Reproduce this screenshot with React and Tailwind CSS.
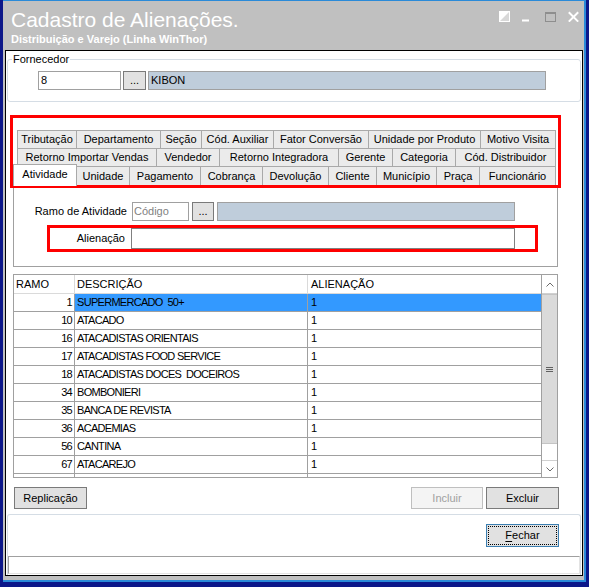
import React from "react";

// Tab captions, grouped by strip row, with their widths
const tabRow1 = [
  { label: "Tributação", cls: "w-[60px] border-l" },
  { label: "Departamento", cls: "w-[84px]" },
  { label: "Seção", cls: "w-[41px]" },
  { label: "Cód. Auxiliar", cls: "w-[72px]" },
  { label: "Fator Conversão", cls: "w-[95px]" },
  { label: "Unidade por Produto", cls: "w-[112px]" },
  { label: "Motivo Visita", cls: "w-[75px]" },
];

const tabRow2 = [
  { label: "Retorno Importar Vendas", cls: "w-[140px] border-l" },
  { label: "Vendedor", cls: "w-[63px]" },
  { label: "Retorno Integradora", cls: "w-[119px]" },
  { label: "Gerente", cls: "w-[54px]" },
  { label: "Categoria", cls: "w-[63px]" },
  { label: "Cód. Distribuidor", cls: "w-[100px]" },
];

const tabRow3 = [
  { label: "Unidade", cls: "w-[53px]" },
  { label: "Pagamento", cls: "w-[71px]" },
  { label: "Cobrança", cls: "w-[62px]" },
  { label: "Devolução", cls: "w-[66px]" },
  { label: "Cliente", cls: "w-[48px]" },
  { label: "Município", cls: "w-[60px]" },
  { label: "Praça", cls: "w-[43px]" },
  { label: "Funcionário", cls: "w-[76px]" },
];

const ramos = [
  [1, "SUPERMERCADO  50+"],
  [10, "ATACADO"],
  [16, "ATACADISTAS ORIENTAIS"],
  [17, "ATACADISTAS FOOD SERVICE"],
  [18, "ATACADISTAS DOCES  DOCEIROS"],
  [34, "BOMBONIERI"],
  [35, "BANCA DE REVISTA"],
  [36, "ACADEMIAS"],
  [56, "CANTINA"],
  [67, "ATACAREJO"],
];

function Tab({ label, cls }) {
  return (
    <div
      className={`flex items-center justify-center shrink-0 h-full border-t border-r border-[#a9a9a9] bg-[#ebebeb] whitespace-nowrap ${cls}`}
    >
      {label}
    </div>
  );
}

function GridRow({ ramo, desc, selected }) {
  return (
    <div className="flex h-[18px] shrink-0 border-b border-[#a0a0a0] text-[11px] tracking-[-0.7px]">
      <div className="w-[61px] shrink-0 flex items-center justify-end pr-[2px] border-r border-[#a0a0a0] bg-white">
        {ramo}
      </div>
      <div
        className={`w-[233px] shrink-0 flex items-center pl-[2px] border-r border-[#a0a0a0] whitespace-pre ${
          selected ? "bg-[#3399ff]" : "bg-white"
        }`}
      >
        {desc}
      </div>
      <div
        className={`flex-1 flex items-center pl-[3px] ${
          selected ? "bg-[#3399ff]" : "bg-white"
        }`}
      >
        {ramo === null ? "" : "1"}
      </div>
    </div>
  );
}

function Chevron({ up }) {
  return (
    <svg width="8" height="5" viewBox="0 0 8 5">
      <path
        d={up ? "M0.5 4.5 L4 1 L7.5 4.5" : "M0.5 0.5 L4 4 L7.5 0.5"}
        fill="none"
        stroke="#6a6a6a"
        strokeWidth="1"
      />
    </svg>
  );
}

export default function App() {
  return (
    <div className="w-[589px] h-[587px] bg-[#0c1789] pl-[3px] pr-[3px] pb-[5px] font-['Liberation_Sans',Arial,sans-serif] text-[11px] leading-[13px] text-black">
      <div className="h-full flex flex-col bg-[#c0c0c0] border-t border-r-2 border-b-2 border-[#2a8ad8] pl-[2px] pr-[1px] pb-[4px]">
        {/* Title bar */}
        <div className="h-[49px] shrink-0 flex justify-between">
          <div className="flex flex-col pl-[6px] text-white">
            <div className="mt-[8px] text-[21px] leading-[21px]">Cadastro de Alienações.</div>
            <div className="mt-[3px] font-bold">Distribuição e Varejo (Linha WinThor)</div>
          </div>
          <div className="flex items-start gap-[12px] pt-[10px] pr-[4px]">
            <svg width="11" height="11" viewBox="0 0 11 11">
              <rect x="0.5" y="0.5" width="10" height="10" fill="#d8d8d8" stroke="#ffffff" />
              <path d="M1 1 L10 1 L1 10 Z" fill="#ffffff" />
            </svg>
            <svg width="11" height="11" viewBox="0 0 11 11">
              <rect x="0" y="8.5" width="7" height="2" fill="#ffffff" />
            </svg>
            <svg width="11" height="11" viewBox="0 0 11 11">
              <rect x="0.5" y="1.5" width="10" height="9" fill="none" stroke="#8e8e8e" />
              <rect x="0" y="1" width="11" height="2" fill="#8e8e8e" />
            </svg>
            <svg width="11" height="11" viewBox="0 0 11 11">
              <path d="M0.8 1.2 L10.2 10.6 M10.2 1.2 L0.8 10.6" stroke="#ffffff" strokeWidth="2" />
            </svg>
          </div>
        </div>

        {/* Client area */}
        <div className="relative h-[526px] shrink-0 flex flex-col bg-white border border-black">
          {/* Fornecedor group */}
          <fieldset className="mt-[2px] ml-[1px] w-[574px] h-[49px] shrink-0 border border-[#d5dde5] rounded-[3px] pl-[4px]">
            <legend className="px-[1px]">Fornecedor</legend>
            <div className="mt-[5px] ml-[26px] flex gap-[2px] h-[19px]">
              <div className="w-[83px] border border-[#a0a0a0] pl-[2px] flex items-center bg-white">8</div>
              <div className="w-[23px] border border-[#7a7a7a] bg-[#e1e1e1] flex items-center justify-center">...</div>
              <div className="w-[398px] border border-[#a0a0a0] bg-[#bfcddb] pl-[2px] flex items-center">KIBON</div>
            </div>
          </fieldset>

          {/* Tab strip */}
          <div className="mt-[28px] ml-[7px] w-[545px] flex flex-col shrink-0">
            <div className="h-[18px] pl-[4px] flex">
              {tabRow1.map((t) => (
                <Tab key={t.label} {...t} />
              ))}
            </div>
            <div className="h-[18px] pl-[4px] flex">
              {tabRow2.map((t) => (
                <Tab key={t.label} {...t} />
              ))}
            </div>
            <div className="h-[19px] flex items-end">
              <div className="relative z-10 w-[64px] h-[22px] -mb-[1px] shrink-0 flex items-center justify-center pb-[3px] border-t border-l border-r border-[#a9a9a9] bg-white">
                Atividade
              </div>
              <div className="h-[19px] flex">
                {tabRow3.map((t) => (
                  <Tab key={t.label} {...t} />
                ))}
              </div>
            </div>
          </div>

          {/* Tab page */}
          <div className="ml-[7px] w-[545px] h-[82px] shrink-0 border border-[#a0a0a0] flex flex-col">
            <div className="mt-[16px] flex items-center h-[19px]">
              <div className="w-[113px] text-right">Ramo de Atividade</div>
              <div className="ml-[5px] w-[57px] h-full border border-[#a0a0a0] pl-[1px] flex items-center text-[#7f7f7f]">
                Código
              </div>
              <div className="ml-[3px] w-[22px] h-full border border-[#7a7a7a] bg-[#e1e1e1] flex items-center justify-center">
                ...
              </div>
              <div className="ml-[3px] w-[298px] h-full border border-[#a0a0a0] bg-[#bfcddb]" />
            </div>
            <div className="mt-[7px] flex items-center h-[21px]">
              <div className="w-[111px] text-right">Alienação</div>
              <div className="ml-[6px] w-[384px] h-full border border-[#808080] bg-white" />
            </div>
          </div>

          {/* Grid */}
          <div className="mt-[7px] ml-[7px] w-[545px] h-[204px] shrink-0 border border-[#a0a0a0] flex">
            <div className="flex-1 flex flex-col overflow-hidden">
              <div className="h-[19px] shrink-0 flex border-b border-[#dadada]">
                <div className="w-[61px] shrink-0 pl-[2px] flex items-center border-r border-[#dadada]">RAMO</div>
                <div className="w-[233px] shrink-0 pl-[2px] flex items-center border-r border-[#dadada]">DESCRIÇÃO</div>
                <div className="flex-1 pl-[3px] flex items-center">ALIENAÇÃO</div>
              </div>
              {ramos.map(([r, d], i) => (
                <GridRow key={r} ramo={r} desc={d} selected={i === 0} />
              ))}
              <GridRow ramo={null} desc="" selected={false} />
            </div>
            <div className="w-[16px] shrink-0 flex flex-col border-l border-[#a0a0a0] bg-white">
              <div className="h-[19px] shrink-0 flex items-center justify-center border-b border-[#d0d0d0]">
                <Chevron up />
              </div>
              <div className="h-[150px] shrink-0 bg-[#dadada] border-y border-[#c4c4c4] flex flex-col items-center justify-center gap-[1px]">
                <div className="w-[7px] h-[1px] bg-[#606060]" />
                <div className="w-[7px] h-[1px] bg-[#606060]" />
                <div className="w-[7px] h-[1px] bg-[#606060]" />
              </div>
              <div className="h-[16px] shrink-0" />
              <div className="flex-1 flex items-center justify-center border-t border-[#d0d0d0]">
                <Chevron />
              </div>
            </div>
          </div>

          {/* Grid actions */}
          <div className="mt-[9px] h-[22px] shrink-0 flex">
            <button className="ml-[8px] w-[73px] h-full border border-[#7a7a7a] bg-[#e1e1e1]">Replicação</button>
            <div className="flex-1" />
            <button className="w-[72px] h-full border border-[#bfbfbf] bg-[#f4f4f4] text-[#a0a0a0]">Incluir</button>
            <button className="ml-[3px] mr-[23px] w-[73px] h-full border border-[#7a7a7a] bg-[#e1e1e1]">Excluir</button>
          </div>

          {/* Footer panel */}
          <div className="mt-[5px] ml-[1px] w-[574px] flex-1 flex flex-col border-t border-l border-r border-[#d5dde5] rounded-t-[3px]">
            <button className="mt-[9px] mr-[21px] self-end w-[73px] h-[23px] shrink-0 border border-[#3c7fb1] bg-[#e1e1e1] p-[1px]">
              <div className="w-full h-full border border-dotted border-black flex items-center justify-center">
                <span>
                  <span className="underline underline-offset-[2px]">F</span>echar
                </span>
              </div>
            </button>
            <div className="mt-[9px] h-[18px] shrink-0 border-t border-l border-[#a0a0a0] border-r border-b border-r-[#e3e3e3] border-b-[#e3e3e3] bg-white" />
          </div>

          {/* Highlight frames */}
          <div className="absolute left-[4px] top-[64px] w-[551px] h-[73px] border-[3px] border-[#fe0000] pointer-events-none" />
          <div className="absolute left-[41px] top-[174px] w-[491px] h-[27px] border-[3px] border-[#fe0000] pointer-events-none" />
        </div>
      </div>
    </div>
  );
}
